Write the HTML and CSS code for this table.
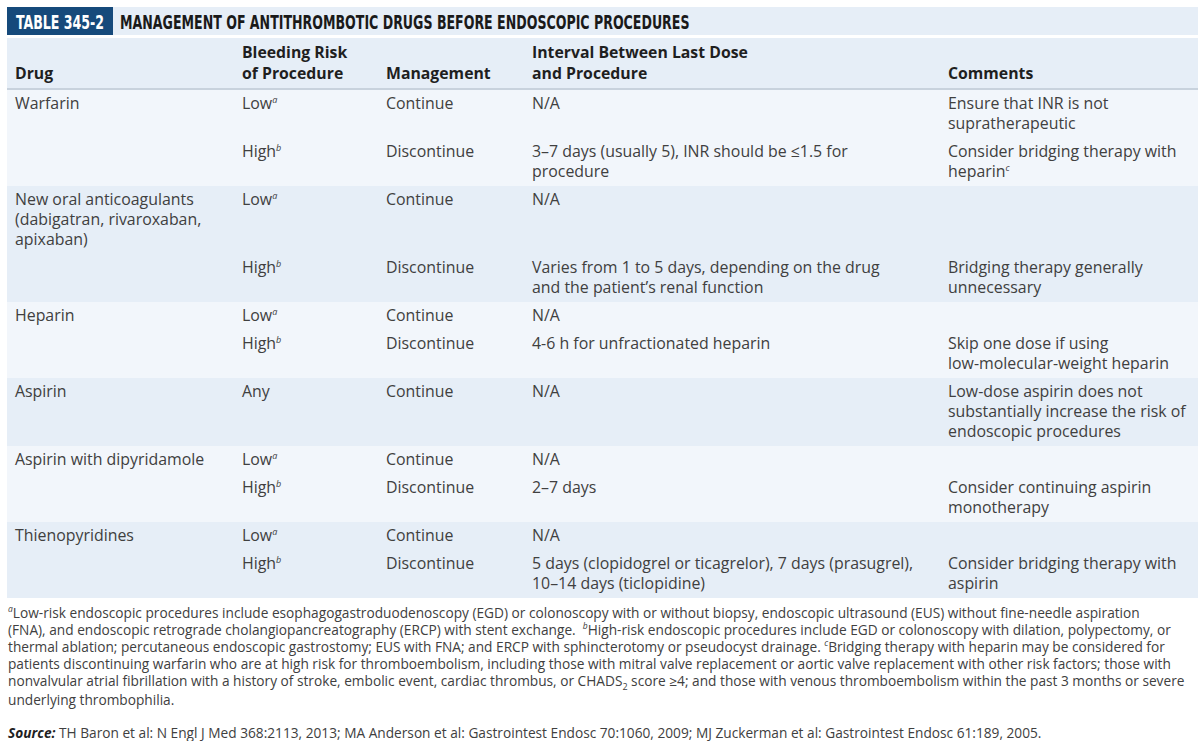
FILE: index.html
```html
<!DOCTYPE html>
<html>
<head>
<meta charset="utf-8">
<link rel="stylesheet" href="styles.css">
</head>
<body>
<div class="page">
  <div class="titlebar">
    <div class="label"><span class="squeeze">TABLE 345-2</span></div>
    <div class="title"><span class="squeeze">MANAGEMENT OF ANTITHROMBOTIC DRUGS BEFORE ENDOSCOPIC PROCEDURES</span></div>
  </div>

  <div class="head grid">
    <div class="c">Drug</div>
    <div class="c">Bleeding Risk<br>of Procedure</div>
    <div class="c">Management</div>
    <div class="c">Interval Between Last Dose<br>and Procedure</div>
    <div class="c">Comments</div>
  </div>

  <div class="group light grid">
    <div class="c">Warfarin</div>
    <div class="c">Low<sup>a</sup></div>
    <div class="c">Continue</div>
    <div class="c">N/A</div>
    <div class="c">Ensure that INR is not<br>supratherapeutic</div>
    <div class="c"></div>
    <div class="c">High<sup>b</sup></div>
    <div class="c">Discontinue</div>
    <div class="c">3–7 days (usually 5), INR should be ≤1.5 for<br>procedure</div>
    <div class="c">Consider bridging therapy with<br>heparin<sup>c</sup></div>
  </div>

  <div class="group dark grid">
    <div class="c">New oral anticoagulants<br>(dabigatran, rivaroxaban,<br>apixaban)</div>
    <div class="c">Low<sup>a</sup></div>
    <div class="c">Continue</div>
    <div class="c">N/A</div>
    <div class="c"></div>
    <div class="c"></div>
    <div class="c">High<sup>b</sup></div>
    <div class="c">Discontinue</div>
    <div class="c">Varies from 1 to 5 days, depending on the drug<br>and the patient’s renal function</div>
    <div class="c">Bridging therapy generally<br>unnecessary</div>
  </div>

  <div class="group light grid">
    <div class="c">Heparin</div>
    <div class="c">Low<sup>a</sup></div>
    <div class="c">Continue</div>
    <div class="c">N/A</div>
    <div class="c"></div>
    <div class="c"></div>
    <div class="c">High<sup>b</sup></div>
    <div class="c">Discontinue</div>
    <div class="c">4-6 h for unfractionated heparin</div>
    <div class="c">Skip one dose if using<br>low-molecular-weight heparin</div>
  </div>

  <div class="group dark grid">
    <div class="c">Aspirin</div>
    <div class="c">Any</div>
    <div class="c">Continue</div>
    <div class="c">N/A</div>
    <div class="c">Low-dose aspirin does not<br>substantially increase the risk of<br>endoscopic procedures</div>
  </div>

  <div class="group light grid">
    <div class="c">Aspirin with dipyridamole</div>
    <div class="c">Low<sup>a</sup></div>
    <div class="c">Continue</div>
    <div class="c">N/A</div>
    <div class="c"></div>
    <div class="c"></div>
    <div class="c">High<sup>b</sup></div>
    <div class="c">Discontinue</div>
    <div class="c">2–7 days</div>
    <div class="c">Consider continuing aspirin<br>monotherapy</div>
  </div>

  <div class="group dark grid">
    <div class="c">Thienopyridines</div>
    <div class="c">Low<sup>a</sup></div>
    <div class="c">Continue</div>
    <div class="c">N/A</div>
    <div class="c"></div>
    <div class="c"></div>
    <div class="c">High<sup>b</sup></div>
    <div class="c">Discontinue</div>
    <div class="c">5 days (clopidogrel or ticagrelor), 7 days (prasugrel),<br>10–14 days (ticlopidine)</div>
    <div class="c">Consider bridging therapy with<br>aspirin</div>
  </div>

  <div class="notes">
    <sup>a</sup>Low-risk endoscopic procedures include esophagogastroduodenoscopy (EGD) or colonoscopy with or without biopsy, endoscopic ultrasound (EUS) without fine-needle aspiration<br>
    (FNA), and endoscopic retrograde cholangiopancreatography (ERCP) with stent exchange. &nbsp;<sup>b</sup>High-risk endoscopic procedures include EGD or colonoscopy with dilation, polypectomy, or<br>
    thermal ablation; percutaneous endoscopic gastrostomy; EUS with FNA; and ERCP with sphincterotomy or pseudocyst drainage. <sup>c</sup>Bridging therapy with heparin may be considered for<br>
    patients discontinuing warfarin who are at high risk for thromboembolism, including those with mitral valve replacement or aortic valve replacement with other risk factors; those with<br>
    nonvalvular atrial fibrillation with a history of stroke, embolic event, cardiac thrombus, or CHADS<sub>2</sub> score ≥4; and those with venous thromboembolism within the past 3 months or severe<br>
    underlying thrombophilia.
  </div>

  <div class="source"><b>Source:</b> TH Baron et al: N Engl J Med 368:2113, 2013; MA Anderson et al: Gastrointest Endosc 70:1060, 2009; MJ Zuckerman et al: Gastrointest Endosc 61:189, 2005.</div>
</div>
</body>
</html>
```

FILE: styles.css
```css
* { box-sizing: border-box; }
html, body { margin: 0; padding: 0; background: #fff; }
body {
  font-family: "Open Sans", "Noto Sans", sans-serif;
  color: #404040;
}
.page {
  width: 1203px;
  padding: 7px 5px 0 7px;
}
.titlebar {
  display: flex;
  align-items: stretch;
  height: 28px;
  background: #e6eef7;
  font-family: "Liberation Sans Narrow", "DejaVu Sans Condensed", sans-serif;
  font-weight: bold;
  font-size: 20px;
  line-height: 28px;
  white-space: nowrap;
}
.squeeze {
  display: inline-block;
  flex: none;
  transform: scaleX(0.70);
  position: relative;
  top: 1px;
}
.label {
  width: 106px;
  flex: none;
  display: flex;
  justify-content: center;
  background: #164a7b;
  color: #fff;
}
.label .squeeze { transform-origin: center; }
.title {
  color: #1a1a1a;
  padding-left: 7px;
}
.title .squeeze { transform-origin: left center; }
.grid {
  display: grid;
  grid-template-columns: 235px 144px 146px 416px 1fr;
}
.head {
  margin-top: 3px;
  background: #e6eef7;
  border-bottom: 2px solid #c8d2dd;
  font-weight: bold;
  color: #1f1f1f;
  font-size: 15.8px;
  line-height: 21px;
  padding: 4px 0 4px;
  align-items: end;
}
.head .c:first-child { padding-left: 8px; }
.group {
  font-size: 15.9px;
  line-height: 20px;
}
.group .c {
  padding: 3px 0 5px;
  white-space: nowrap;
}
.group .c:nth-child(5n+1) { padding-left: 8px; }
.light { background: #f2f6fb; }
.dark { background: #e6eef7; }
sup {
  font-style: italic;
  font-size: 9px;
  vertical-align: top;
  line-height: 1;
  position: relative;
  top: 2px;
}
sub {
  font-size: 9px;
  line-height: 1;
}
.notes {
  margin-top: 6px;
  padding-left: 1px;
  font-size: 13.7px;
  line-height: 17px;
  white-space: nowrap;
}
.notes sup { font-size: 8.5px; top: 1px; }
.source {
  margin-top: 16px;
  padding-left: 1px;
  font-size: 13.7px;
  line-height: 17px;
  white-space: nowrap;
}
.source b { font-style: italic; color: #1f1f1f; }
```
